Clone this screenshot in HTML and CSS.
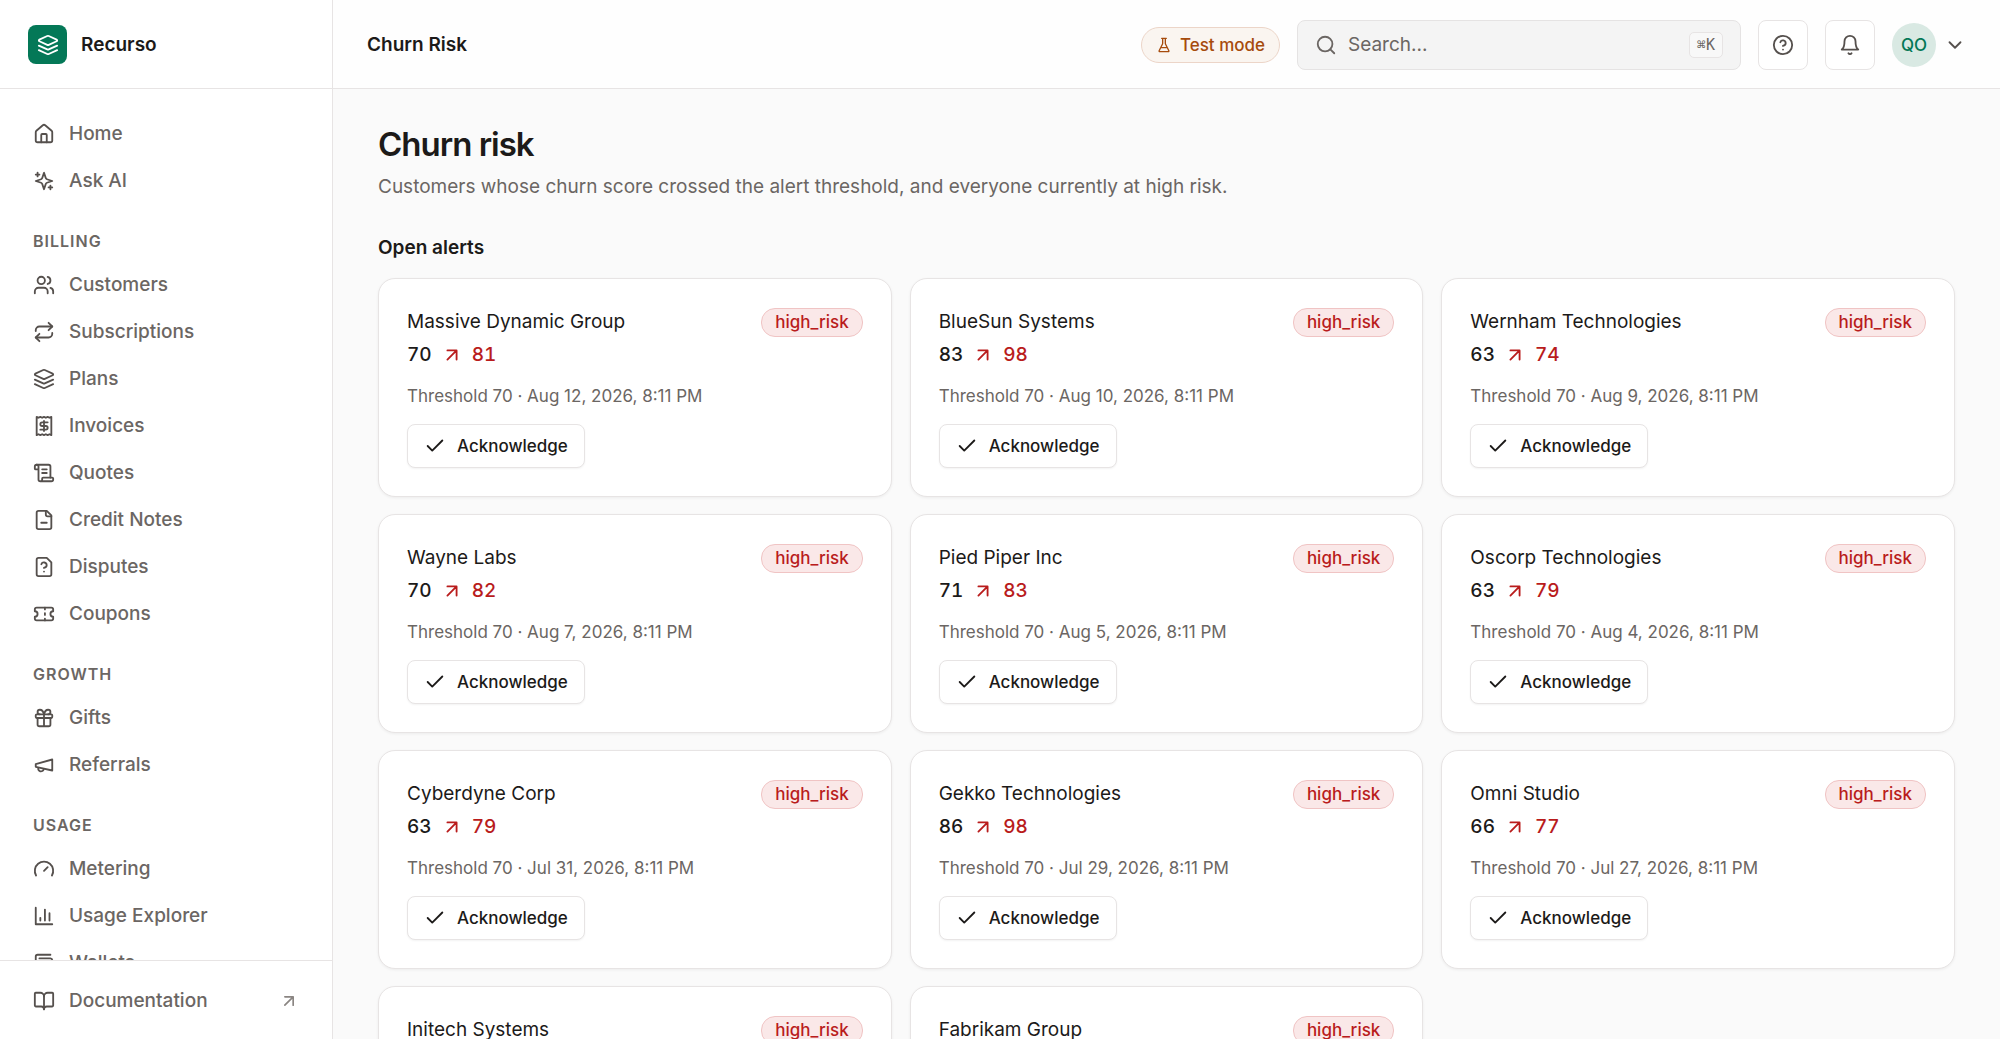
FILE: index.html
```html
<!DOCTYPE html>
<html lang="en">
<head>
<meta charset="utf-8">
<meta name="viewport" content="width=device-width, initial-scale=1">
<title>Churn Risk - Recurso</title>
<link rel="stylesheet" href="styles.css">
</head>
<body>
<svg class="sprite" aria-hidden="true">
  <symbol id="layers" viewBox="0 0 24 24"><path d="m12.83 2.18a2 2 0 0 0-1.66 0L2.6 6.08a1 1 0 0 0 0 1.83l8.58 3.91a2 2 0 0 0 1.66 0l8.58-3.9a1 1 0 0 0 0-1.83Z"/><path d="m22 12.65-9.17 4.16a2 2 0 0 1-1.66 0L2 12.65"/><path d="m22 17.65-9.17 4.16a2 2 0 0 1-1.66 0L2 17.65"/></symbol>
  <symbol id="home" viewBox="0 0 24 24"><path d="M15 21v-8a1 1 0 0 0-1-1h-4a1 1 0 0 0-1 1v8"/><path d="M3 10a2 2 0 0 1 .709-1.528l7-5.999a2 2 0 0 1 2.582 0l7 5.999A2 2 0 0 1 21 10v9a2 2 0 0 1-2 2H5a2 2 0 0 1-2-2z"/></symbol>
  <symbol id="sparkles" viewBox="0 0 24 24"><path d="m12 3-1.912 5.813a2 2 0 0 1-1.275 1.275L3 12l5.813 1.912a2 2 0 0 1 1.275 1.275L12 21l1.912-5.813a2 2 0 0 1 1.275-1.275L21 12l-5.813-1.912a2 2 0 0 1-1.275-1.275L12 3Z"/><path d="M5 3v4M19 17v4M3 5h4M17 19h4"/></symbol>
  <symbol id="users" viewBox="0 0 24 24"><path d="M16 21v-2a4 4 0 0 0-4-4H6a4 4 0 0 0-4 4v2"/><circle cx="9" cy="7" r="4"/><path d="M22 21v-2a4 4 0 0 0-3-3.87M16 3.13a4 4 0 0 1 0 7.75"/></symbol>
  <symbol id="repeat" viewBox="0 0 24 24"><path d="m17 2 4 4-4 4"/><path d="M3 11v-1a4 4 0 0 1 4-4h14"/><path d="m7 22-4-4 4-4"/><path d="M21 13v1a4 4 0 0 1-4 4H3"/></symbol>
  <symbol id="receipt" viewBox="0 0 24 24"><path d="M4 2v20l2-1 2 1 2-1 2 1 2-1 2 1 2-1 2 1V2l-2 1-2-1-2 1-2-1-2 1-2-1-2 1Z"/><path d="M16 8h-6a2 2 0 1 0 0 4h4a2 2 0 1 1 0 4H8M12 17.500v-11"/></symbol>
  <symbol id="scroll" viewBox="0 0 24 24"><path d="M15 12h-5M15 8h-5M19 17V5a2 2 0 0 0-2-2H4"/><path d="M8 21h12a2 2 0 0 0 2-2v-1a1 1 0 0 0-1-1H11a1 1 0 0 0-1 1v1a2 2 0 1 1-4 0V5a2 2 0 1 0-4 0v2a1 1 0 0 0 1 1h3"/></symbol>
  <symbol id="file-minus" viewBox="0 0 24 24"><path d="M15 2H6a2 2 0 0 0-2 2v16a2 2 0 0 0 2 2h12a2 2 0 0 0 2-2V7Z"/><path d="M14 2v4a2 2 0 0 0 2 2h4M9 15h6"/></symbol>
  <symbol id="file-question" viewBox="0 0 24 24"><path d="M12 17h.01"/><path d="M15 2H6a2 2 0 0 0-2 2v16a2 2 0 0 0 2 2h12a2 2 0 0 0 2-2V7z"/><path d="M9.100 9a3 3 0 0 1 5.820 1c0 2-3 3-3 3"/></symbol>
  <symbol id="ticket" viewBox="0 0 24 24"><path d="M2 9a3 3 0 0 1 0 6v2a2 2 0 0 0 2 2h16a2 2 0 0 0 2-2v-2a3 3 0 0 1 0-6V7a2 2 0 0 0-2-2H4a2 2 0 0 0-2 2Z"/><path d="M13 5v2M13 17v2M13 11v2"/></symbol>
  <symbol id="gift" viewBox="0 0 24 24"><rect x="3" y="8" width="18" height="4" rx="1"/><path d="M12 8v13M19 12v7a2 2 0 0 1-2 2H7a2 2 0 0 1-2-2v-7"/><path d="M7.500 8a2.500 2.500 0 0 1 0-5A4.800 8 0 0 1 12 8a4.800 8 0 0 1 4.500-5 2.500 2.500 0 0 1 0 5"/></symbol>
  <symbol id="megaphone" viewBox="0 0 24 24"><path d="m3 11 18-5v12L3 14v-3z"/><path d="M11.600 16.800a3 3 0 1 1-5.800-1.600"/></symbol>
  <symbol id="gauge" viewBox="0 0 24 24"><path d="m12 14 4-4"/><path d="M3.340 19a10 10 0 1 1 17.320 0"/></symbol>
  <symbol id="chart" viewBox="0 0 24 24"><path d="M3 3v18h18M18 17V9M13 17V5M8 17v-3"/></symbol>
  <symbol id="wallet" viewBox="0 0 24 24"><path d="M17 14h.01"/><path d="M7 7h12a2 2 0 0 1 2 2v10a2 2 0 0 1-2 2H5a2 2 0 0 1-2-2V5a2 2 0 0 1 2-2h14"/></symbol>
  <symbol id="book" viewBox="0 0 24 24"><path d="M12 7v14"/><path d="M3 18a1 1 0 0 1-1-1V4a1 1 0 0 1 1-1h5a4 4 0 0 1 4 4 4 4 0 0 1 4-4h5a1 1 0 0 1 1 1v13a1 1 0 0 1-1 1h-6a3 3 0 0 0-3 3 3 3 0 0 0-3-3z"/></symbol>
  <symbol id="arrow" viewBox="0 0 24 24"><path d="M7 7h10v10M7 17 17 7"/></symbol>
  <symbol id="flask" viewBox="0 0 24 24"><path d="M10 2v7.527a2 2 0 0 1-.211.896L4.720 20.550a1 1 0 0 0 .900 1.450h12.760a1 1 0 0 0 .900-1.450l-5.069-10.127A2 2 0 0 1 14 9.527V2M8.500 2h7M7 16h10"/></symbol>
  <symbol id="search" viewBox="0 0 24 24"><circle cx="11" cy="11" r="8"/><path d="m21 21-4.300-4.300"/></symbol>
  <symbol id="help" viewBox="0 0 24 24"><circle cx="12" cy="12" r="10"/><path d="M9.090 9a3 3 0 0 1 5.830 1c0 2-3 3-3 3M12 17h.01"/></symbol>
  <symbol id="bell" viewBox="0 0 24 24"><path d="M6 8a6 6 0 0 1 12 0c0 7 3 9 3 9H3s3-2 3-9"/><path d="M10.300 21a1.940 1.940 0 0 0 3.400 0"/></symbol>
  <symbol id="chevron" viewBox="0 0 24 24"><path d="m6 9 6 6 6-6"/></symbol>
  <symbol id="check" viewBox="0 0 24 24"><path d="M20 6 9 17l-5-5"/></symbol>
</svg>

<div class="app">
  <aside class="sidebar">
    <a class="brand" href="#"><span class="brand-mark"><svg class="icon"><use href="#layers"/></svg></span>Recurso</a>
    <nav class="nav" aria-label="Main">
      <a class="nav-item" href="#"><svg class="icon"><use href="#home"/></svg>Home</a>
      <a class="nav-item" href="#"><svg class="icon"><use href="#sparkles"/></svg>Ask AI</a>
      <h2 class="nav-label">Billing</h2>
      <a class="nav-item" href="#"><svg class="icon"><use href="#users"/></svg>Customers</a>
      <a class="nav-item" href="#"><svg class="icon"><use href="#repeat"/></svg>Subscriptions</a>
      <a class="nav-item" href="#"><svg class="icon"><use href="#layers"/></svg>Plans</a>
      <a class="nav-item" href="#"><svg class="icon"><use href="#receipt"/></svg>Invoices</a>
      <a class="nav-item" href="#"><svg class="icon"><use href="#scroll"/></svg>Quotes</a>
      <a class="nav-item" href="#"><svg class="icon"><use href="#file-minus"/></svg>Credit Notes</a>
      <a class="nav-item" href="#"><svg class="icon"><use href="#file-question"/></svg>Disputes</a>
      <a class="nav-item" href="#"><svg class="icon"><use href="#ticket"/></svg>Coupons</a>
      <h2 class="nav-label">Growth</h2>
      <a class="nav-item" href="#"><svg class="icon"><use href="#gift"/></svg>Gifts</a>
      <a class="nav-item" href="#"><svg class="icon"><use href="#megaphone"/></svg>Referrals</a>
      <h2 class="nav-label">Usage</h2>
      <a class="nav-item" href="#"><svg class="icon"><use href="#gauge"/></svg>Metering</a>
      <a class="nav-item" href="#"><svg class="icon"><use href="#chart"/></svg>Usage Explorer</a>
      <a class="nav-item" href="#"><svg class="icon"><use href="#wallet"/></svg>Wallets</a>
    </nav>
    <div class="sidebar-foot">
      <a class="nav-item" href="#"><svg class="icon"><use href="#book"/></svg>Documentation<svg class="icon icon-out"><use href="#arrow"/></svg></a>
    </div>
  </aside>

  <div class="content">
    <header class="topbar">
      <span class="crumb">Churn Risk</span>
      <span class="mode"><svg class="icon"><use href="#flask"/></svg>Test mode</span>
      <label class="search">
        <svg class="icon"><use href="#search"/></svg>
        <input type="search" placeholder="Search..." aria-label="Search">
        <kbd>⌘K</kbd>
      </label>
      <button class="icon-btn" type="button" aria-label="Help"><svg class="icon"><use href="#help"/></svg></button>
      <button class="icon-btn" type="button" aria-label="Notifications"><svg class="icon"><use href="#bell"/></svg></button>
      <button class="account" type="button" aria-label="Account"><span class="avatar">QO</span><svg class="icon"><use href="#chevron"/></svg></button>
    </header>

    <main class="page">
      <h1>Churn risk</h1>
      <p class="lead">Customers whose churn score crossed the alert threshold, and everyone currently at high risk.</p>
      <h2 class="section-title">Open alerts</h2>
      <div class="grid" id="alerts"></div>
    </main>
  </div>
</div>

<template id="alert-card">
  <article class="card">
    <div class="card-head">
      <div>
        <h3 class="name"></h3>
        <p class="score"><span class="from"></span><svg class="icon"><use href="#arrow"/></svg><span class="to"></span></p>
      </div>
      <span class="badge">high_risk</span>
    </div>
    <p class="meta"></p>
    <button class="ack" type="button"><svg class="icon"><use href="#check"/></svg>Acknowledge</button>
  </article>
</template>
<script src="app.js"></script>
</body>
</html>
```
FILE: app.js
```js
const alerts = [
  ["Massive Dynamic Group", 70, 81, "Aug 12, 2026, 8:11 PM"],
  ["BlueSun Systems", 83, 98, "Aug 10, 2026, 8:11 PM"],
  ["Wernham Technologies", 63, 74, "Aug 9, 2026, 8:11 PM"],
  ["Wayne Labs", 70, 82, "Aug 7, 2026, 8:11 PM"],
  ["Pied Piper Inc", 71, 83, "Aug 5, 2026, 8:11 PM"],
  ["Oscorp Technologies", 63, 79, "Aug 4, 2026, 8:11 PM"],
  ["Cyberdyne Corp", 63, 79, "Jul 31, 2026, 8:11 PM"],
  ["Gekko Technologies", 86, 98, "Jul 29, 2026, 8:11 PM"],
  ["Omni Studio", 66, 77, "Jul 27, 2026, 8:11 PM"],
  ["Initech Systems", 68, 80, "Jul 25, 2026, 8:11 PM"],
  ["Fabrikam Group", 72, 85, "Jul 23, 2026, 8:11 PM"]
];

const grid = document.getElementById("alerts");
const template = document.getElementById("alert-card");

for (const [name, from, to, date] of alerts) {
  const card = template.content.cloneNode(true);
  card.querySelector(".name").textContent = name;
  card.querySelector(".from").textContent = from;
  card.querySelector(".to").textContent = to;
  card.querySelector(".meta").textContent = `Threshold 70 · ${date}`;
  grid.append(card);
}
```
FILE: styles.css
```css
:root {
  --ink: #1c1a19;
  --muted: #6b6663;
  --icon: #55504d;
  --line: #e7e4e4;
  --green: #047857;
  --red: #b91c1c;
  --amber: #a64b0c;
}

* { box-sizing: border-box; margin: 0; }

body {
  font: 400 19px/28px Inter, "Liberation Sans", sans-serif;
  color: var(--ink);
  background: #fafafa;
}

a { color: inherit; text-decoration: none; }
button, input { font: inherit; color: inherit; }
button { cursor: pointer; }

.sprite { display: none; }

.icon {
  width: 22px;
  height: 22px;
  flex: none;
  fill: none;
  stroke: currentColor;
  stroke-width: 2;
  stroke-linecap: round;
  stroke-linejoin: round;
}

.app { display: flex; height: 100vh; overflow: hidden; }

/* Sidebar */
.sidebar {
  display: flex;
  flex-direction: column;
  flex: none;
  width: 333px;
  background: #fff;
  border-right: 1px solid var(--line);
}
.brand {
  display: flex;
  align-items: center;
  gap: 14px;
  flex: none;
  height: 89px;
  padding: 1px 28px 0;
  border-bottom: 1px solid var(--line);
  font-weight: 600;
}
.brand-mark {
  display: grid;
  place-items: center;
  width: 39px;
  height: 39px;
  border-radius: 8px;
  background: var(--green);
  color: #fff;
}
.nav {
  flex: 1;
  min-height: 0;
  padding: 21px 17px;
  overflow-y: auto;
  scrollbar-width: none;
}
.nav-item {
  display: flex;
  align-items: center;
  gap: 14px;
  height: 47px;
  padding: 0 16px;
  color: var(--muted);
  font-weight: 500;
}
.nav-item .icon { color: var(--icon); }
.nav-label {
  padding: 26px 16px 9px;
  color: var(--muted);
  font-size: 16px;
  font-weight: 600;
  line-height: 22px;
  letter-spacing: 1px;
  text-transform: uppercase;
}
.sidebar-foot {
  flex: none;
  padding: 16px 17px 15px;
  border-top: 1px solid var(--line);
}
.nav-item .icon-out { width: 20px; height: 20px; margin-left: auto; color: #8a8582; }

/* Top bar */
.content { display: flex; flex-direction: column; flex: 1; min-width: 0; }
.topbar {
  display: flex;
  align-items: center;
  gap: 17px;
  flex: none;
  height: 89px;
  padding: 2px 34px 0;
  background: #fefefe;
  border-bottom: 1px solid var(--line);
}
.crumb { margin-right: auto; font-weight: 600; }
.mode {
  display: flex;
  align-items: center;
  gap: 8px;
  height: 36px;
  padding: 0 14px;
  border: 1px solid #ecd5c8;
  border-radius: 18px;
  background: #faf5f0;
  color: var(--amber);
  font-size: 17px;
  font-weight: 500;
}
.mode .icon { width: 16px; height: 16px; }
.search {
  display: flex;
  align-items: center;
  gap: 11px;
  width: 444px;
  height: 50px;
  padding: 0 17px;
  border: 1px solid #e5e3e3;
  border-radius: 8px;
  background: #f4f4f4;
  color: var(--muted);
}
.search input {
  flex: 1;
  min-width: 0;
  padding: 0;
  border: 0;
  outline: 0;
  background: none;
}
.search input::placeholder { color: var(--muted); opacity: 1; }
.search kbd {
  padding: 0 7px;
  border: 1px solid var(--line);
  border-radius: 5px;
  background: #f8f8f8;
  font: 400 15px/24px "DejaVu Sans Mono", monospace;
}
.icon-btn {
  display: grid;
  place-items: center;
  width: 50px;
  height: 50px;
  padding: 0;
  border: 1px solid var(--line);
  border-radius: 8px;
  background: #fff;
  color: var(--icon);
}
.account {
  display: flex;
  align-items: center;
  gap: 8px;
  padding: 0;
  border: 0;
  background: none;
  color: var(--icon);
}
.avatar {
  display: grid;
  place-items: center;
  width: 44px;
  height: 44px;
  border-radius: 50%;
  background: #d9e9e3;
  color: var(--green);
  font-size: 17px;
  font-weight: 500;
}

/* Page */
.page {
  flex: 1;
  min-height: 0;
  padding: 34px 45px;
  overflow-y: auto;
  scrollbar-width: none;
}
h1 {
  font-size: 33px;
  font-weight: 600;
  line-height: 42px;
  letter-spacing: -1px;
}
.lead { margin-top: 8px; color: var(--muted); }
.section-title {
  margin: 33px 0 16px;
  font-size: 19px;
  font-weight: 600;
}
.grid {
  display: grid;
  grid-template-columns: repeat(3, minmax(0, 1fr));
  gap: 17px 18px;
}
.card {
  padding: 29px 28px 28px;
  border: 1px solid var(--line);
  border-radius: 17px;
  background: #fff;
  box-shadow: 0 1px 3px rgba(0, 0, 0, 0.06);
}
.card-head {
  display: flex;
  align-items: flex-start;
  justify-content: space-between;
  gap: 14px;
}
.name { font-size: 19px; font-weight: 400; }
.score {
  display: flex;
  align-items: center;
  gap: 9px;
  margin-top: 5px;
  font-weight: 500;
  font-variant-numeric: tabular-nums;
}
.score .icon, .to { color: var(--red); }
.badge {
  padding: 0 13px;
  border: 1px solid #f0c4c4;
  border-radius: 14px;
  background: #fae8e8;
  color: var(--red);
  font-size: 17px;
  font-weight: 500;
  line-height: 27px;
}
.meta {
  margin: 16px 0;
  color: var(--muted);
  font-size: 17px;
  line-height: 23px;
}
.ack {
  display: flex;
  align-items: center;
  gap: 11px;
  height: 44px;
  padding: 0 16px;
  border: 1px solid var(--line);
  border-radius: 8px;
  background: #fff;
  box-shadow: 0 1px 2px rgba(0, 0, 0, 0.05);
  font-size: 17px;
  font-weight: 500;
}
```
